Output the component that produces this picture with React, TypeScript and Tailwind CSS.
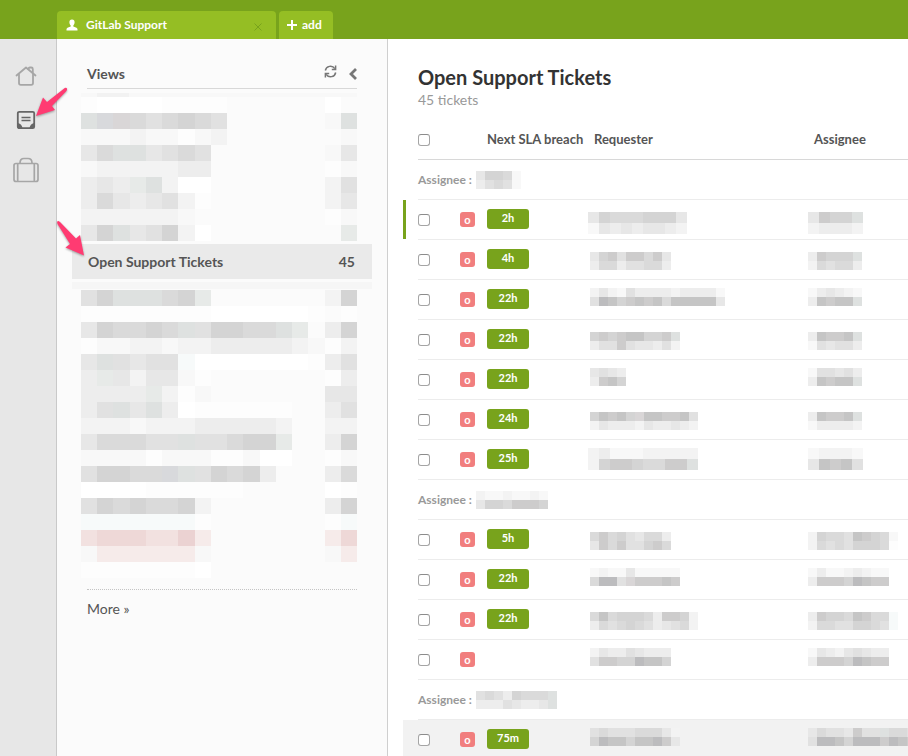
import React from "react";

/* Shades used by the redaction mosaics, lightest to darkest, then the tinted ones. */
const shades: Record<string, string> = {
  ".": "bg-transparent",
  a: "bg-white",
  b: "bg-[#fdfdfd]",
  c: "bg-[#f8f8f8]",
  d: "bg-[#f3f3f3]",
  e: "bg-[#ededed]",
  f: "bg-[#e7e7e7]",
  g: "bg-[#e1e1e1]",
  h: "bg-[#dadada]",
  i: "bg-[#d4d4d4]",
  j: "bg-[#cdcccc]",
  k: "bg-[#c5c5c5]",
  l: "bg-[#bcbcbe]",
  G: "bg-[#dee1e0]",
  H: "bg-[#e7eae8]",
  B: "bg-[#d8d9dc]",
  P: "bg-[#d9d6d7]",
  t: "bg-[#f7fafa]",
  p: "bg-[#f6ebea]",
  q: "bg-[#f2e1e0]",
  r: "bg-[#eed8d7]",
  s: "bg-[#ebd2d2]",
};

function WideMosaic({ rows }: { rows: string[] }) {
  return (
    <div aria-hidden="true" className="ml-6 mr-[30px]">
      {rows.map((row, y) => (
        <div key={y} className="grid h-4 grid-cols-17">
          {row.split("").map((c, x) => (
            <span key={x} className={shades[c]} />
          ))}
        </div>
      ))}
    </div>
  );
}

function Mosaic({ rows, large = false }: { rows: string[]; large?: boolean }) {
  const cell = large ? "size-[11px]" : "size-[9px]";
  return (
    <span aria-hidden="true" className="inline-block align-top">
      {rows.map((row, y) => (
        <span key={y} className="flex">
          {row.split("").map((c, x) => (
            <span key={x} className={`${cell} ${shades[c]}`} />
          ))}
        </span>
      ))}
    </span>
  );
}

const viewsAbove = [
  "baaaabbbb......a.",
  "GBPhghihg......cG",
  "cccdccbcd.......c",
  "fhGHHgghH......cf",
  "cdddddee.......bc",
  "efeHGdaa.......dg",
  "ehfefgdb.......df",
  "ddddddc........bc",
  "fiGfgida........H",
].map((row, i) => (i === 3 ? "fhGGfghg.......cf" : row));

const viewsBelow = [
  "giGGGhiH.......di",
  "bbbbbbbbaaaaaab.b",
  "fihhihGgiihhGH.ei",
  "bccddcddeeeeedcbd",
  "fGgfggtaaaaaaabeg",
  "eHfdffcb.......be",
  "eeeeHdbc.......ff",
  "egGfGeabbbbbb..eg",
  "dddcdddeeeeed..dd",
  "fhhhggGgghiiH..ei",
  "ccccbcccbbcaa..bc",
  "giihhBGgihie...eh",
  "aaaabbbbbb.....ab",
  "gihihhid.......ei",
  "tttttttb.......bt",
  "qrrrqqsp.......pr",
  "cppppppc.......cp",
  "bbbbbbba.........",
];

type Ticket = {
  sla?: string;
  requester: string[];
  assignee: string[];
  large?: boolean;
  low?: boolean;
  marked?: boolean;
  hovered?: boolean;
};

type Group = { name: string[]; tickets: Ticket[] };

const groups: Group[] = [
  {
    name: ["fiihc", "eghgc"],
    tickets: [
      { sla: "2h", requester: ["fihhhiiif", "cfefeffed"], assignee: ["fjiiG", "deeed"], large: true, low: true, marked: true },
      { sla: "4h", requester: ["fijgjjhjf", "ehhegghhe"], assignee: ["ejiiiG", "dhghhe"], low: true },
      { sla: "22h", requester: ["dfdcgeeeedeeeec", "glkijkjkhkkkkkf"], assignee: ["cefedc", "ekjkkG"] },
      { sla: "22h", requester: ["ijijkkiijG", "eggjgffegd"], assignee: ["ekjjkG", "cgfgge"], low: true },
      { sla: "22h", requester: ["fgfe", "ejki"], assignee: ["cggfge", "ekjkkG"] },
      { sla: "24h", requester: ["ikjkiPkkjjkg", "dfeeedfeefed"], assignee: ["ekjjkG", "ceeeed"], low: true },
      { sla: "25h", requester: ["decccddddd", "dijjihhjjG"], assignee: ["cdddc", "fkjkg"], large: true },
    ],
  },
  {
    name: ["dccdccdc", "fiihjjji"],
    tickets: [
      { sla: "5h", requester: ["hjhigfhhe", "fjhjggijh"], assignee: ["dihhgkjihc", "dhghgiiihb"], low: true },
      { sla: "22h", requester: ["cdccfccccc", "hllgPjjjkj"], assignee: ["ceccdedcc", "ejjjilkjj"] },
      { sla: "22h", requester: ["hkhiiihejjid", "ehghihgefghd"], assignee: ["ejiihkjhht", "dhhggiihgt"], low: true },
      { requester: ["dfeegfeee", "gjjiilkki"], assignee: ["cfedfgfee", "ejjjilkjj"] },
    ],
  },
  {
    name: ["ghgeihhhG", "eeegfeefG"],
    tickets: [
      { sla: "75m", requester: ["ghggghhhfd", "ilkkikkljf"], assignee: ["fhggfjggGhhg", "gllkillljlkj"], hovered: true },
    ],
  },
];

function Tick({ label }: { label: string }) {
  return (
    <input
      type="checkbox"
      aria-label={label}
      className="block size-3 appearance-none rounded-[3px] border border-[#a5a5a5] border-t-[#8c8c8c] bg-white checked:bg-[#78a31c]"
    />
  );
}

function TicketRow({ ticket }: { ticket: Ticket }) {
  const line = "h-10 border-b border-[#ececec] p-0";
  const drop = ticket.low ? "pt-3" : "pt-2";
  const inset = ticket.large ? "pl-0" : "pl-0.5";
  return (
    <tr className={ticket.hovered ? "bg-[#f2f2f2]" : ""}>
      <td className="h-10 p-0">
        {ticket.marked && <span className="mb-px block h-[39px] w-[3px] bg-[#78a31c]" />}
      </td>
      <td className={line}>
        <Tick label="Select ticket" />
      </td>
      <td className={line}>
        <span className="flex size-[15px] items-center justify-center rounded-[3px] bg-[#f17e7e] pb-px text-[11px] leading-none font-bold text-white">
          o
        </span>
      </td>
      <td className={line}>
        {ticket.sla && (
          <span className="mb-0.5 flex h-5 w-[42px] items-center justify-center rounded-[3px] bg-[#78a31c] text-[11px] font-bold text-white">
            {ticket.sla}
          </span>
        )}
      </td>
      <td className={`${line} ${inset} align-top ${drop}`}>
        <Mosaic rows={ticket.requester} large={ticket.large} />
      </td>
      <td className={`${line} align-top ${drop}`}>
        <Mosaic rows={ticket.assignee} large={ticket.large} />
      </td>
    </tr>
  );
}

function TicketTable() {
  const head = "h-10 border-b border-[#d8d8d8] p-0 text-left text-[13px] font-bold text-[#555] whitespace-nowrap";
  return (
    <table className="w-full table-fixed border-separate border-spacing-0">
      <colgroup>
        <col className="w-[15px]" />
        <col className="w-[42px]" />
        <col className="w-[27px]" />
        <col className="w-[101px]" />
        <col className="w-[220px]" />
        <col />
      </colgroup>
      <thead>
        <tr>
          <td className="p-0" />
          <th className={head}>
            <Tick label="Select all tickets" />
          </th>
          <td className={head} />
          <th className={head}>Next SLA breach</th>
          <th className={`${head} pl-1.5`}>Requester</th>
          <th className={`${head} pl-1.5`}>Assignee</th>
        </tr>
      </thead>
      {groups.map((group, i) => (
        <tbody key={i}>
          <tr>
            <td className="p-0" />
            <th colSpan={5} className="h-10 border-b border-[#ececec] p-0 text-left text-xs font-bold text-[#999]">
              <span className="flex items-center gap-1">
                Assignee :
                <Mosaic rows={group.name} />
              </span>
            </th>
          </tr>
          {group.tickets.map((ticket, j) => (
            <TicketRow key={j} ticket={ticket} />
          ))}
        </tbody>
      ))}
    </table>
  );
}

function HomeIcon() {
  return (
    <svg width="22" height="20" viewBox="0 0 22 20" fill="none" stroke="#a6a6a6" strokeWidth="1.8" strokeLinejoin="round" strokeLinecap="round">
      <path d="M1.5 9.5 L11 1.5 L20.5 9.5" />
      <path d="M4 8.500 V17 Q4 18.800 5.800 18.800 H16.200 Q18 18.800 18 17 V8.500" />
      <path d="M13.500 3.200 Q13.500 1.500 15 1.500 H16.200 Q17.800 1.500 17.800 3 V6.800" />
    </svg>
  );
}

function ViewsIcon() {
  return (
    <svg width="20" height="20" viewBox="0 0 20 20" fill="none" stroke="#666" strokeWidth="1.8">
      <rect x="1.800" y="1.800" width="16.400" height="16.400" rx="1.500" />
      <path d="M5.500 7.500 H14.500 M5.500 10.500 H14.500" strokeWidth="1.5" />
      <path d="M2 13 Q5.800 14 6.500 18 H2 Z M18 13 Q14.200 14 13.500 18 H18 Z" fill="#666" stroke="none" />
    </svg>
  );
}

function CaseIcon() {
  return (
    <svg width="26" height="26" viewBox="0 0 26 26" fill="none" stroke="#a6a6a6" strokeWidth="1.7">
      <rect x="1" y="6.500" width="24" height="18" rx="2" />
      <path d="M4.700 6.500 V24.500 M21.300 6.500 V24.500" />
      <path d="M7 6 Q7 1.500 11 1.500 H15 Q19 1.500 19 6" />
    </svg>
  );
}

function UserIcon() {
  return (
    <svg width="12" height="12" viewBox="0 0 12 12" fill="white">
      <path d="M6 0.500 C7.800 0.500 8.700 1.800 8.600 3.400 C8.500 4.900 7.900 5.800 7.300 6.400 V7.400 L10.500 8.700 Q11.500 9.200 11.500 10.300 V11.500 H0.500 V10.300 Q0.500 9.200 1.500 8.700 L4.700 7.400 V6.400 C4.100 5.800 3.500 4.900 3.400 3.400 C3.300 1.800 4.200 0.500 6 0.500 Z" />
    </svg>
  );
}

function RefreshIcon() {
  return (
    <svg width="13" height="13" viewBox="0 0 13 13" fill="none" stroke="#777" strokeWidth="1.500">
      <path d="M1.300 5.500 A5.200 5.200 0 0 1 10.800 3.700 M11.700 7.500 A5.200 5.200 0 0 1 2.200 9.300" />
      <path d="M11.600 0.500 V4.600 H7.800 M1.400 12.500 V8.400 H5.200" />
    </svg>
  );
}

function Arrow({ d }: { d: string }) {
  return (
    <svg width="40" height="44" viewBox="0 0 40 44" className="drop-shadow-[0_1px_1px_rgba(0,0,0,0.35)]" aria-hidden="true">
      <path d={d} fill="#ff3b72" />
    </svg>
  );
}

export default function App() {
  return (
    <div className="relative flex h-screen flex-col overflow-hidden bg-white font-[Lato,'Liberation_Sans',sans-serif] text-[#555]">
      <header className="flex h-[39px] shrink-0 items-end gap-[3px] bg-[#78a31c] pl-[57px] text-xs font-bold text-white">
        <div className="flex h-7 w-[219px] items-center rounded-t bg-[#95be24] pr-3.5 pl-[9px]">
          <button className="flex flex-1 items-center gap-2 text-left">
            <UserIcon />
            GitLab Support
          </button>
          <button aria-label="Close tab" className="pt-1">
            <svg width="8" height="8" viewBox="0 0 8 8" stroke="#78a31c" strokeWidth="1">
              <path d="M0.500 0.500 L7.500 7.500 M7.500 0.500 L0.500 7.500" />
            </svg>
          </button>
        </div>
        <button className="flex h-7 w-[54px] items-center gap-[5px] rounded-t bg-[#95be24] pl-2">
          <svg width="10" height="10" viewBox="0 0 10 10" stroke="white" strokeWidth="2">
            <path d="M5 0 V10 M0 5 H10" />
          </svg>
          add
        </button>
      </header>

      <div className="flex min-h-0 flex-1">
        <nav className="flex w-[57px] shrink-0 flex-col items-center border-r border-[#c9c9c9] bg-[#e7e7e7] pt-[27px] pr-1">
          <button aria-label="Home">
            <HomeIcon />
          </button>
          <button aria-label="Views" className="mt-6">
            <ViewsIcon />
          </button>
          <button aria-label="Organizations" className="mt-[27px]">
            <CaseIcon />
          </button>
        </nav>

        <aside className="w-[331px] shrink-0 border-r border-[#cfcfcf] bg-[#fbfbfb]">
          <div className="mx-[30px] flex h-[50px] items-center border-b border-[#d8d8d8] pt-5">
            <h2 className="flex-1 text-sm font-bold">Views</h2>
            <div className="flex items-center gap-3">
              <button aria-label="Refresh views" className="pb-1">
                <RefreshIcon />
              </button>
              <button aria-label="Collapse views">
                <svg width="8" height="12" viewBox="0 0 8 12" fill="none" stroke="#777" strokeWidth="2.800">
                  <path d="M7 1 L2 6 L7 11" />
                </svg>
              </button>
            </div>
          </div>
          <div className="mt-1 mr-[30px] ml-6 flex h-1" aria-hidden="true">
            <span className="w-4 bg-[#f8f8f8]" />
            <span className="w-8 bg-[#f2f2f2]" />
            <span className="flex-1 bg-[#f8f8f8]" />
          </div>
          <WideMosaic rows={viewsAbove} />
          <a
            href="#open"
            className="mx-[15px] mt-[3px] flex h-[35px] items-center justify-between bg-[#eaeaea] pr-[17px] pl-4 text-sm font-bold"
          >
            <span>Open Support Tickets</span>
            <span>45</span>
          </a>
          <div className="mx-[15px] mt-[3px] mb-px h-[7px] bg-[#f6f6f6]" aria-hidden="true" />
          <WideMosaic rows={viewsBelow} />
          <div className="mx-[30px] mt-[11px] border-t border-dotted border-[#c4c4c4] pt-[9px]">
            <a href="#more" className="block text-sm leading-5">
              More »
            </a>
          </div>
        </aside>

        <main className="min-w-0 flex-1 overflow-hidden pl-[15px]">
          <div className="h-[81px] pt-[26px] pl-[15px]">
            <h1 className="text-xl leading-6 font-bold text-[#333]">Open Support Tickets</h1>
            <p className="text-sm leading-[22px] text-[#999]">45 tickets</p>
          </div>
          <TicketTable />
        </main>
      </div>

      <div className="absolute top-[84px] left-[32px]">
        <Arrow d="M4 32 L11 13.500 L15 18 L31.500 5 Q34 3 35 4.500 Q35.500 6 34 7.500 L20 22 L23 26 Z" />
      </div>
      <div className="absolute top-[216px] left-[52px]">
        <Arrow d="M32 39.500 L13.500 31.500 L18 28 L5.500 8 Q4.500 5.500 6 5 Q7 4.700 8.500 6.500 L24 22.500 L28 19 Z" />
      </div>
    </div>
  );
}
